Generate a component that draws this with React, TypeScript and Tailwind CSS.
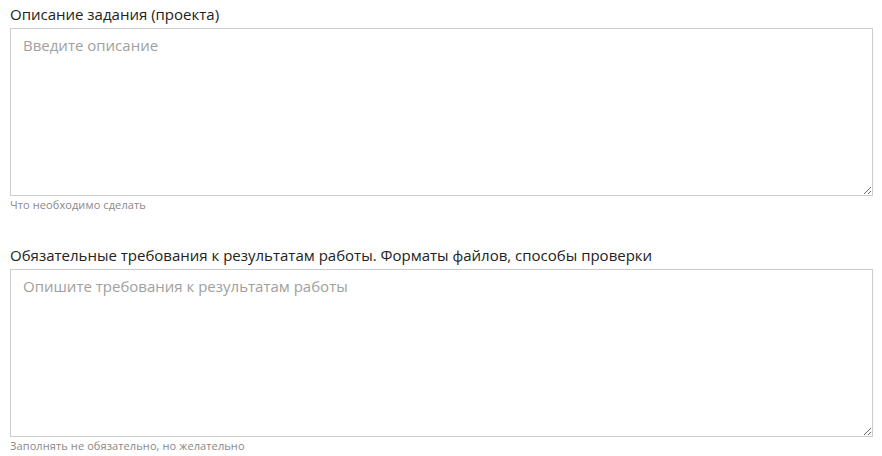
export default function App() {
  return (
    <div className="w-[882px] h-[456px] bg-white font-['Open_Sans',sans-serif] text-[#222]">
      <div className="pl-[10px] pr-[9px] pt-[5px]">
        <Field
          label="Описание задания (проекта)"
          placeholder="Введите описание"
          hint="Что необходимо сделать"
        />
        <div className="h-[33px]" />
        <Field
          label="Обязательные требования к результатам работы. Форматы файлов, способы проверки"
          placeholder="Опишите требования к результатам работы"
          hint="Заполнять не обязательно, но желательно"
        />
      </div>
    </div>
  )
}

function Field({ label, placeholder, hint }: { label: string; placeholder: string; hint: string }) {
  return (
    <div className="flex flex-col">
      <label className="text-[15px] leading-[18px] text-[#222]">{label}</label>
      <textarea
        placeholder={placeholder}
        className="mt-[5px] h-[168px] w-full resize-y border border-[#ccc] px-[12px] py-[6px] text-[15px] leading-[20px] text-[#333] outline-none placeholder:text-[#a0a0a0]"
      />
      <div className="mt-[1px] text-[11px] leading-[16px] tracking-[0.1px] text-[#888]">{hint}</div>
    </div>
  )
}
